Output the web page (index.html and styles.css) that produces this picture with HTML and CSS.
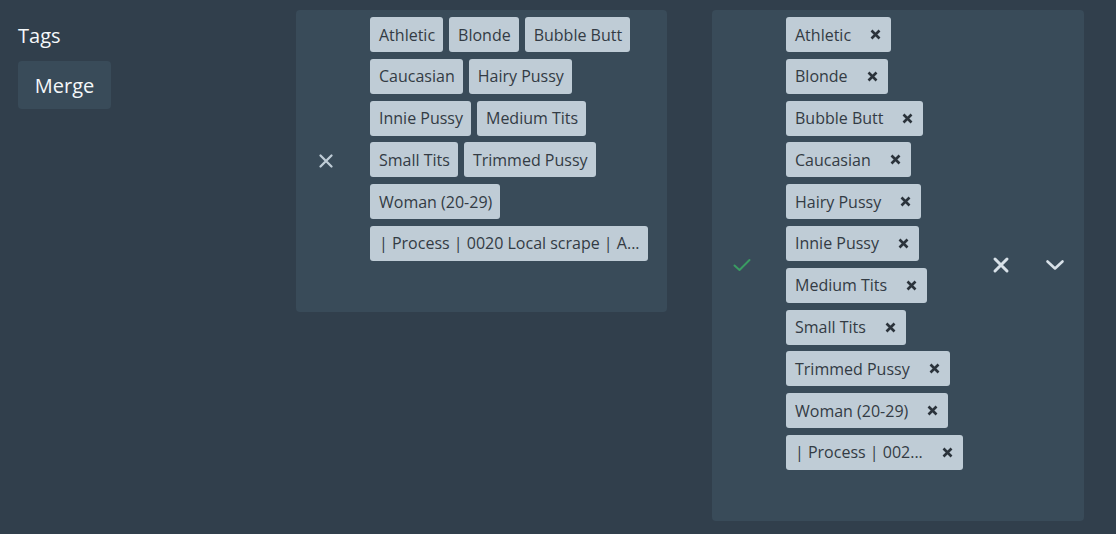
FILE: index.html
```html
<!DOCTYPE html>
<html lang="en">
<head>
<meta charset="utf-8">
<title>Tags Merge</title>
<link rel="stylesheet" href="styles.css">
</head>
<body>
<div class="page">
  <aside class="sidebar">
    <h2 class="sidebar-title">Tags</h2>
    <button class="merge-btn">Merge</button>
  </aside>

  <section class="panel panel-source">
    <div class="panel-icon">
      <svg width="16" height="16" viewBox="0 0 16 16"><path d="M2.5 2.5 L13.5 13.5 M13.5 2.5 L2.5 13.5" stroke="#bfccd6" stroke-width="2.3" stroke-linecap="round" fill="none"/></svg>
    </div>
    <div class="tag-wrap">
      <span class="tag">Athletic</span>
      <span class="tag">Blonde</span>
      <span class="tag">Bubble Butt</span>
      <span class="tag">Caucasian</span>
      <span class="tag">Hairy Pussy</span>
      <span class="tag">Innie Pussy</span>
      <span class="tag">Medium Tits</span>
      <span class="tag">Small Tits</span>
      <span class="tag">Trimmed Pussy</span>
      <span class="tag">Woman (20-29)</span>
      <span class="tag">| Process | 0020 Local scrape | A...</span>
    </div>
  </section>

  <section class="panel panel-target">
    <div class="panel-icon">
      <svg width="18" height="14" viewBox="0 0 18 14"><path d="M1.5 7.5 L6.5 12 L16.5 2" stroke="#3a9b62" stroke-width="2" stroke-linecap="round" stroke-linejoin="round" fill="none"/></svg>
    </div>
    <div class="tag-list">
      <span class="tag tag-removable">Athletic <span class="tag-x"><svg width="11" height="11" viewBox="0 0 11 11"><path d="M1.5 1.5 L9.5 9.5 M9.5 1.5 L1.5 9.5" stroke="#2b333b" stroke-width="2.6" fill="none"/></svg></span></span>
      <span class="tag tag-removable">Blonde <span class="tag-x"><svg width="11" height="11" viewBox="0 0 11 11"><path d="M1.5 1.5 L9.5 9.5 M9.5 1.5 L1.5 9.5" stroke="#2b333b" stroke-width="2.6" fill="none"/></svg></span></span>
      <span class="tag tag-removable">Bubble Butt <span class="tag-x"><svg width="11" height="11" viewBox="0 0 11 11"><path d="M1.5 1.5 L9.5 9.5 M9.5 1.5 L1.5 9.5" stroke="#2b333b" stroke-width="2.6" fill="none"/></svg></span></span>
      <span class="tag tag-removable">Caucasian <span class="tag-x"><svg width="11" height="11" viewBox="0 0 11 11"><path d="M1.5 1.5 L9.5 9.5 M9.5 1.5 L1.5 9.5" stroke="#2b333b" stroke-width="2.6" fill="none"/></svg></span></span>
      <span class="tag tag-removable">Hairy Pussy <span class="tag-x"><svg width="11" height="11" viewBox="0 0 11 11"><path d="M1.5 1.5 L9.5 9.5 M9.5 1.5 L1.5 9.5" stroke="#2b333b" stroke-width="2.6" fill="none"/></svg></span></span>
      <span class="tag tag-removable">Innie Pussy <span class="tag-x"><svg width="11" height="11" viewBox="0 0 11 11"><path d="M1.5 1.5 L9.5 9.5 M9.5 1.5 L1.5 9.5" stroke="#2b333b" stroke-width="2.6" fill="none"/></svg></span></span>
      <span class="tag tag-removable">Medium Tits <span class="tag-x"><svg width="11" height="11" viewBox="0 0 11 11"><path d="M1.5 1.5 L9.5 9.5 M9.5 1.5 L1.5 9.5" stroke="#2b333b" stroke-width="2.6" fill="none"/></svg></span></span>
      <span class="tag tag-removable">Small Tits <span class="tag-x"><svg width="11" height="11" viewBox="0 0 11 11"><path d="M1.5 1.5 L9.5 9.5 M9.5 1.5 L1.5 9.5" stroke="#2b333b" stroke-width="2.6" fill="none"/></svg></span></span>
      <span class="tag tag-removable">Trimmed Pussy <span class="tag-x"><svg width="11" height="11" viewBox="0 0 11 11"><path d="M1.5 1.5 L9.5 9.5 M9.5 1.5 L1.5 9.5" stroke="#2b333b" stroke-width="2.6" fill="none"/></svg></span></span>
      <span class="tag tag-removable">Woman (20-29) <span class="tag-x"><svg width="11" height="11" viewBox="0 0 11 11"><path d="M1.5 1.5 L9.5 9.5 M9.5 1.5 L1.5 9.5" stroke="#2b333b" stroke-width="2.6" fill="none"/></svg></span></span>
      <span class="tag tag-removable">| Process | 002... <span class="tag-x"><svg width="11" height="11" viewBox="0 0 11 11"><path d="M1.5 1.5 L9.5 9.5 M9.5 1.5 L1.5 9.5" stroke="#2b333b" stroke-width="2.6" fill="none"/></svg></span></span>
    </div>
    <div class="panel-actions">
      <button class="icon-btn" aria-label="Clear">
        <svg width="18" height="18" viewBox="0 0 18 18"><path d="M3 3 L15 15 M15 3 L3 15" stroke="#d8e1e8" stroke-width="3" stroke-linecap="round" fill="none"/></svg>
      </button>
      <button class="icon-btn" aria-label="Open">
        <svg width="20" height="12" viewBox="0 0 20 12"><path d="M2.5 2.5 L10 9.5 L17.5 2.5" stroke="#d8e1e8" stroke-width="2.6" stroke-linecap="round" stroke-linejoin="round" fill="none"/></svg>
      </button>
    </div>
  </section>
</div>
</body>
</html>
```

FILE: styles.css
```css
html, body {
  margin: 0;
  padding: 0;
  background: #313f4c;
  height: 100%;
}

body {
  font-family: "Open Sans", "Noto Sans", sans-serif;
  color: #f5f8fa;
}

.page {
  display: flex;
  align-items: flex-start;
  padding-top: 10px;
}

.sidebar {
  width: 296px;
  flex: none;
  padding-left: 18px;
  box-sizing: border-box;
}

.sidebar-title {
  margin: 14px 0 0;
  font-size: 20px;
  font-weight: 400;
  line-height: 24px;
  color: #f5f8fa;
}

.merge-btn {
  margin-top: 13px;
  height: 48px;
  width: 93px;
  padding: 0;
  border: none;
  border-radius: 4px;
  background: #394b59;
  color: #f5f8fa;
  font-family: inherit;
  font-size: 20px;
  display: flex;
  align-items: center;
  justify-content: center;
}

.panel {
  flex: none;
  background: #394b59;
  border-radius: 4px;
  display: flex;
  align-items: center;
  box-sizing: border-box;
}

.panel-source {
  width: 371px;
  padding-right: 16px;
}

.panel-target {
  width: 372px;
  margin-left: 45px;
}

.panel-icon {
  width: 59px;
  flex: none;
  display: flex;
  justify-content: center;
  align-items: center;
  margin-right: 15px;
}

.tag-wrap {
  flex: 1;
  min-width: 0;
  display: flex;
  flex-wrap: wrap;
  gap: 6.8px 6px;
  padding: 7px 0 51px;
}

.tag-list {
  flex: 1;
  min-width: 0;
  display: flex;
  flex-direction: column;
  align-items: flex-start;
  gap: 6.8px;
  padding: 7px 0 51px;
}

.tag {
  display: inline-flex;
  align-items: center;
  height: 35px;
  padding: 0 8px 0 9px;
  background: #bfccd6;
  color: #333b44;
  border-radius: 3px;
  font-size: 16px;
  white-space: nowrap;
  box-sizing: border-box;
  max-width: 100%;
}

.tag-removable {
  padding-right: 10px;
}

.tag-x {
  display: inline-flex;
  margin-left: 19px;
}

.panel-actions {
  flex: none;
  display: flex;
  align-items: center;
  gap: 14px;
  padding-right: 9px;
}

.icon-btn {
  width: 40px;
  height: 36px;
  padding: 0;
  border: none;
  background: transparent;
  display: flex;
  align-items: center;
  justify-content: center;
}
```
